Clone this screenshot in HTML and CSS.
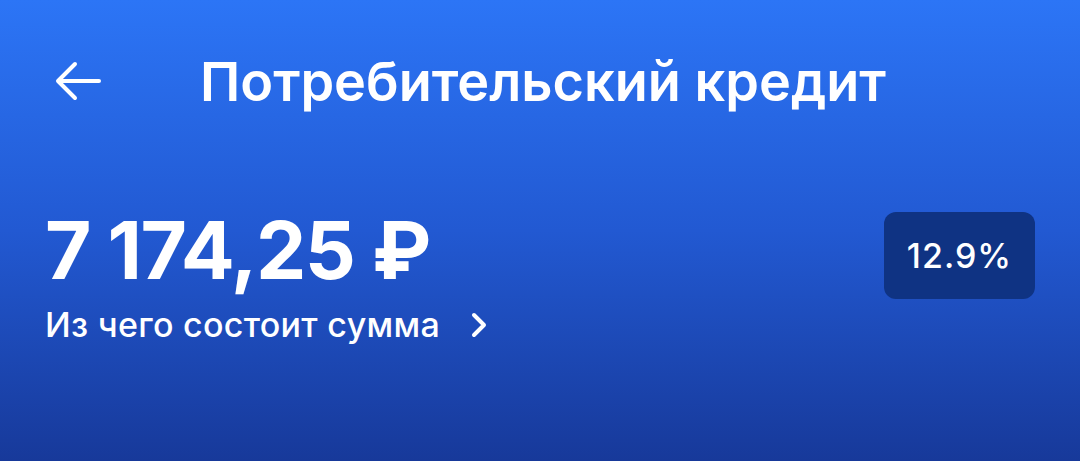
FILE: index.html
```html
<!DOCTYPE html>
<html lang="ru">
<head>
    <meta charset="UTF-8">
    <meta name="viewport" content="width=device-width, initial-scale=1.0">
    <title>Потребительский кредит</title>
    <link rel="stylesheet" href="styles.css">
</head>
<body>
    <div class="screen">
        <div class="topbar">
            <button class="back-btn" aria-label="Назад">
                <svg width="48" height="40" viewBox="0 0 48 40" fill="none" stroke="white" stroke-width="4" stroke-linecap="round" stroke-linejoin="round">
                    <path d="M45 20H5"/>
                    <path d="M21 3L4 20l17 17"/>
                </svg>
            </button>
            <h1>Потребительский кредит</h1>
        </div>

        <div class="summary">
            <div class="amount-block">
                <div class="amount">7 174,25 ₽</div>
                <a class="breakdown" href="#">
                    Из чего состоит сумма
                    <svg width="18" height="26" viewBox="0 0 18 26" fill="none" stroke="white" stroke-width="4" stroke-linecap="round" stroke-linejoin="round">
                        <path d="M4 3l10 10L4 23"/>
                    </svg>
                </a>
            </div>
            <div class="rate">12.9%</div>
        </div>
    </div>
</body>
</html>
```

FILE: styles.css
```css
body {
    margin: 0;
    font-family: Inter, "Noto Sans", sans-serif;
    color: white;
}

.screen {
    width: 1080px;
    height: 461px;
    overflow: hidden;
    background: linear-gradient(180deg, #2c75f6 0%, #2259d2 50%, #17399a 100%);
}

.topbar {
    display: flex;
    align-items: center;
    height: 162px;
    padding-left: 54px;
}

.back-btn {
    background: none;
    border: none;
    padding: 0;
    width: 48px;
    height: 40px;
    margin-right: 98px;
    cursor: pointer;
}

.topbar h1 {
    margin: 0;
    font-size: 54px;
    font-weight: 600;
    letter-spacing: 0;
}

.summary {
    display: flex;
    justify-content: space-between;
    align-items: flex-start;
    padding: 48px 45px 0 45px;
}

.amount {
    font-size: 80px;
    font-weight: 700;
    line-height: 1;
    letter-spacing: -1.5px;
}

.breakdown {
    display: flex;
    align-items: center;
    gap: 30px;
    margin-top: 14px;
    color: white;
    text-decoration: none;
    font-size: 34px;
    font-weight: 500;
    letter-spacing: 0.3px;
}

.rate {
    background: #0f3383;
    border-radius: 12px;
    width: 151px;
    height: 87px;
    margin-top: 2px;
    display: flex;
    align-items: center;
    justify-content: center;
    font-size: 34px;
    font-weight: 500;
    letter-spacing: 1px;
}
```
